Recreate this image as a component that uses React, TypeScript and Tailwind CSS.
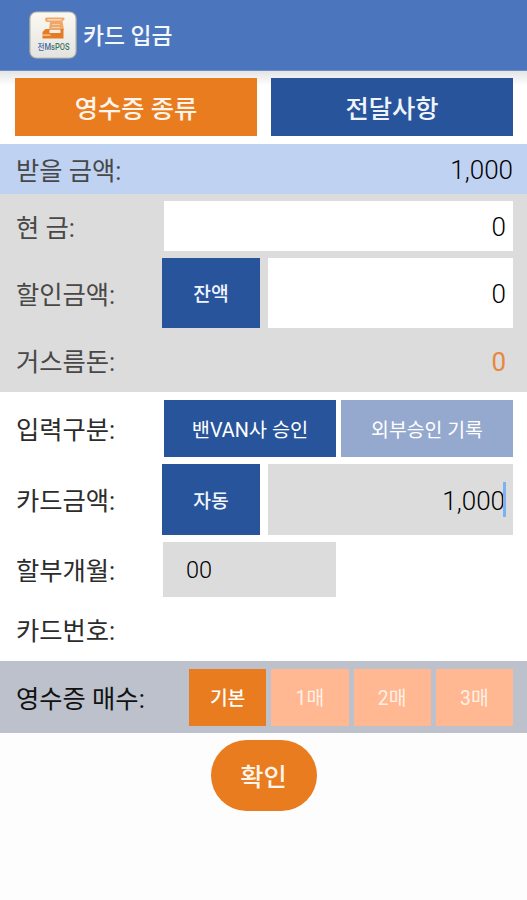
import type { ReactNode } from 'react';
import clsx from 'clsx';

const COPIES = ['기본', '1매', '2매', '3매'];

function Label({ children, className }: { children: ReactNode; className?: string }) {
  return (
    <span className={clsx('shrink-0 whitespace-nowrap pt-[5px] text-[25.3px] leading-none', className ?? 'text-[#484848]')}>
      {children}
    </span>
  );
}

function AppIcon() {
  return (
    <svg className="h-12 w-12 shrink-0" viewBox="0 0 48 48">
      <defs>
        <linearGradient id="tile" x1="0" y1="0" x2="0" y2="1">
          <stop offset="0" stopColor="#fbf9f1" />
          <stop offset="1" stopColor="#e3e3e1" />
        </linearGradient>
      </defs>
      <rect x="1" y="1" width="46" height="46" rx="6.5" fill="url(#tile)" stroke="#bdb9a2" strokeWidth="1.2" />
      <path d="M16 8q0-1.500 2-1.500h16q2 0 1.500 2l-2 1.500 1.500 9H20l1-8h-3.500q-1.500-1-1.500-3z" fill="#f0a868" />
      <path d="M18.500 8.200h14v1.300h-14z" fill="#fbe3c8" />
      <path d="M23 13h8v1h-8zM23 16h8v1h-8z" fill="#f8cda3" />
      <path d="M13.500 21l3-3h4v4h11v-4h3v9.500h-21z" fill="#e57b22" />
      <path d="M13.500 23.500h8v1.200h-8z" fill="#f9d3ae" />
      <text x="8.500" y="38.500" fontSize="8.500" fontWeight="500" textLength="32" lengthAdjust="spacingAndGlyphs" fill="#4567a3">
        전M<tspan fill="#43775f">sPOS</tspan>
      </text>
    </svg>
  );
}

export default function App() {
  return (
    <div className="flex h-[900px] w-[527px] flex-col overflow-hidden bg-[#fdfdfd] font-['Roboto','Noto_Sans_CJK_KR',sans-serif] text-black">
      {/* Title bar */}
      <header className="flex h-[71px] shrink-0 items-center gap-[6px] border-b border-[#6c8dc5] bg-[#4b76be] pl-[29px]">
        <AppIcon />
        <h1 className="pt-1 text-[22.800px] leading-none font-medium text-[#f4f7fd]">카드 입금</h1>
      </header>

      {/* Top actions */}
      <div className="grid h-[73px] shrink-0 grid-cols-2 gap-[14px] bg-linear-to-b from-[#e4e4e4] to-white to-20% pt-[7px] pr-[14px] pb-2 pl-[15px] text-[25.3px] font-medium text-[#fff5ec]">
        <button className="bg-[#e87c1e] pt-[5px]">영수증 종류</button>
        <button className="bg-[#28549c] pt-[5px] text-[#f0f4fc]">전달사항</button>
      </div>

      <div className="flex h-[50px] shrink-0 items-center justify-between bg-[#c0d2f2] pr-[14px] pl-4">
        <Label>받을 금액:</Label>
        <span className="pt-[2px] text-[26px] leading-none font-light">1,000</span>
      </div>

      {/* Cash, discount and change */}
      <section className="flex h-[198px] shrink-0 flex-col bg-[#dcdcdc] pt-[7px] pr-[14px] pl-4">
        <div className="flex h-[50px] items-center">
          <Label className="w-[148px] text-[#484848]">현 금:</Label>
          <div className="flex h-full flex-1 items-center justify-end bg-white pt-[2px] pr-[7px] text-[26px] leading-none font-light">0</div>
        </div>
        <div className="mt-[7px] flex h-[70px] items-center">
          <Label className="w-[146px] text-[#484848]">할인금액:</Label>
          <button className="h-full w-[98px] bg-[#28549c] pt-[5px] text-[19.3px] font-medium text-[#f0f4fc]">잔액</button>
          <div className="ml-2 flex h-full flex-1 items-center justify-end bg-white pt-[2px] pr-[7px] text-[26px] leading-none font-light">0</div>
        </div>
        <div className="flex flex-1 items-center justify-between pr-[7px]">
          <Label>거스름돈:</Label>
          <span className="pt-[3px] text-[26px] leading-none text-[#e8883a]">0</span>
        </div>
      </section>

      {/* Card payment */}
      <section className="flex h-[269px] shrink-0 flex-col bg-white pt-2 pr-[14px] pl-4">
        <div className="flex h-[57px] items-center text-white">
          <Label className="w-[148px] text-[#2c2c2c]">입력구분:</Label>
          <button className="h-full w-[172px] bg-[#28549c] pt-[5px] text-[19.8px]">밴VAN사 승인</button>
          <button className="ml-[5px] h-full flex-1 bg-[#95a9cf] pt-[5px] text-[19.4px]">외부승인 기록</button>
        </div>
        <div className="mt-[7px] flex h-[71px] items-center">
          <Label className="w-[146px] text-[#2c2c2c]">카드금액:</Label>
          <button className="h-full w-[98px] bg-[#28549c] pt-[5px] text-[19.3px] font-medium text-[#f0f4fc]">자동</button>
          <div className="ml-2 flex h-full flex-1 items-center justify-end bg-[#dcdcdc] pr-[7px] text-[26px] leading-none font-light">
            <span className="pt-[3px]">1,000</span>
            <span className="-ml-[2px] h-[35px] w-[3px] bg-[#7db2f2]" />
          </div>
        </div>
        <div className="mt-[7px] flex h-[55px] items-center">
          <Label className="w-[147px] text-[#2c2c2c]">할부개월:</Label>
          <div className="flex h-full w-[173px] items-center bg-[#dcdcdc] pt-[2px] pl-[23px] text-[23.500px] leading-none font-light">00</div>
        </div>
        <div className="flex flex-1 items-center">
          <Label className="text-[#2c2c2c]">카드번호:</Label>
        </div>
      </section>

      {/* Receipt copies */}
      <div className="flex h-[72px] shrink-0 items-center bg-[#bcc1cc] pr-[14px] pl-4">
        <Label className="w-[173px] text-[#111]">영수증 매수:</Label>
        <div className="grid h-[57px] flex-1 grid-cols-4 gap-[5px] text-[19.3px] text-white">
          {COPIES.map((copy, i) => (
            <button key={copy} className={clsx('pt-[5px]', i === 0 ? 'bg-[#e87c1e] font-medium' : 'bg-[#ffb891] text-[#fff0e6]')}>
              {copy}
            </button>
          ))}
        </div>
      </div>

      <button className="mt-[7px] h-[71px] w-[106px] shrink-0 self-center rounded-full bg-[#e87c1e] pt-[5px] text-[25.3px] font-medium text-[#fff5ec]">
        확인
      </button>
    </div>
  );
}
